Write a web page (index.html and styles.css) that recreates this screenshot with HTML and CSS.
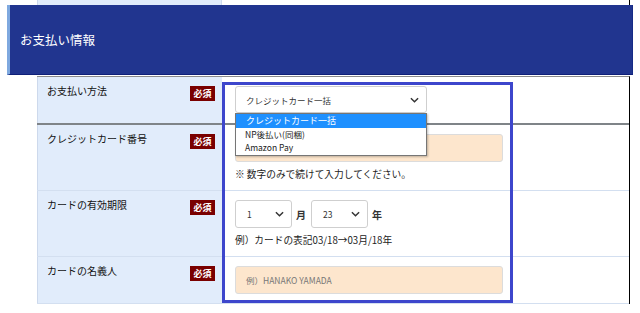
FILE: index.html
```html
<!DOCTYPE html>
<html lang="ja">
<head>
<meta charset="utf-8">
<link rel="stylesheet" href="styles.css">
</head>
<body>
<div class="prev">
  <div class="prev-gap"></div>
  <div class="prev-label"></div>
  <div class="prev-value"></div>
</div>
<div class="header">お支払い情報</div>
<div class="table">
  <div class="row row1">
    <div class="label"><span>お支払い方法</span><span class="req">必須</span></div>
    <div class="value">
      <div class="select wide"><span>クレジットカード一括</span><svg class="chev" viewBox="0 0 10 6" width="9" height="6"><path d="M1 1l4 4 4-4" fill="none" stroke="#333" stroke-width="1.6"/></svg></div>
    </div>
  </div>
  <div class="row row2">
    <div class="label"><span>クレジットカード番号</span><span class="req">必須</span></div>
    <div class="value">
      <div class="input"></div>
      <div class="note">※ 数字のみで続けて入力してください。</div>
    </div>
  </div>
  <div class="row row3">
    <div class="label"><span>カードの有効期限</span><span class="req">必須</span></div>
    <div class="value">
      <div class="dates">
        <div class="select small"><span>1</span><svg class="chev" viewBox="0 0 10 6" width="9" height="6"><path d="M1 1l4 4 4-4" fill="none" stroke="#333" stroke-width="1.6"/></svg></div>
        <span class="unit">月</span>
        <div class="select small"><span>23</span><svg class="chev" viewBox="0 0 10 6" width="9" height="6"><path d="M1 1l4 4 4-4" fill="none" stroke="#333" stroke-width="1.6"/></svg></div>
        <span class="unit">年</span>
      </div>
      <div class="note">例）カードの表記03/18→03月/18年</div>
    </div>
  </div>
  <div class="row row4">
    <div class="label"><span>カードの名義人</span><span class="req">必須</span></div>
    <div class="value">
      <div class="input"><span class="ph">例）HANAKO YAMADA</span></div>
    </div>
  </div>
  <div class="highlight"></div>
  <ul class="dropdown">
    <li class="active">クレジットカード一括</li>
    <li>NP後払い(同梱)</li>
    <li>Amazon Pay</li>
  </ul>
</div>
</body>
</html>
```
FILE: styles.css
```css
* { box-sizing: border-box; }
html, body { margin: 0; padding: 0; background: #fff; }
body {
  font-family: "Noto Sans CJK JP", "Noto Sans", sans-serif;
  color: #333;
  width: 640px;
  height: 313px;
  overflow: hidden;
}
.prev { display: flex; height: 5px; }
.prev-gap { width: 37px; }
.prev-label { width: 185px; background: #e1ecfb; border-left: 1px solid #cdd9ec; border-right: 1px solid #cfdbee; }
.prev-value { width: 408px; border-right: 1px solid #000; }

.header {
  margin-left: 7px;
  width: 626px;
  height: 70px;
  background: #21358f;
  border-left: 3px solid #7fa9df;
  border-right: 1px solid #162a86;
  border-bottom: 1px solid #0f1f78;
  color: #fff;
  font-size: 12.5px;
  display: flex;
  align-items: center;
  padding-left: 10px;
}

.table {
  position: relative;
  margin-top: 1px;
  margin-left: 37px;
  width: 593px;
  border-top: 1px solid #8a8a8a;
  border-right: 1px solid #000;
}
.row {
  display: grid;
  grid-template-columns: 185px 1fr;
  border-bottom: 1px solid #d3dff0;
}
.row1 { height: 48px; border-bottom: 2px solid #7f8488; }
.row2 { height: 66px; }
.row3 { height: 66px; }
.row4 { height: 47px; }

.label {
  background: #e1ecfb;
  border-left: 1px solid #cdd9ec;
  display: flex;
  justify-content: space-between;
  align-items: flex-start;
  padding: 7px 7px 0 9px;
  font-size: 10px;
  line-height: 14px;
  color: #111;
}
.req {
  background: #7a0000;
  color: #fff;
  font-size: 9px;
  font-weight: bold;
  line-height: 15px;
  height: 15px;
  width: 25px;
  text-align: center;
  margin-top: 2px;
}
.value { padding: 9px 0 0 13px; }

.select {
  display: flex;
  align-items: center;
  justify-content: space-between;
  height: 27px;
  border: 1px solid #cfcfcf;
  border-radius: 3px;
  background: #fff;
  font-size: 8.5px;
  color: #333;
  padding: 0 7px 0 10px;
}
.select.wide { width: 192px; }
.select.small { width: 57px; height: 28px; padding-left: 11px; }
.chev { display: block; }

.input {
  width: 268px;
  height: 28px;
  background: #fde6cd;
  border: 1px solid #dcdcdc;
  border-radius: 3px;
  display: flex;
  align-items: center;
  padding-left: 10px;
}
.ph { font-size: 8.5px; color: #777; }
.note { margin-top: 5px; font-size: 9.7px; line-height: 14px; color: #222; }

.dates { display: flex; align-items: center; }
.unit { font-size: 10px; font-weight: bold; margin: 0 4px 0 4px; }
.dates .unit:first-of-type { margin-right: 5px; }

.highlight {
  position: absolute;
  left: 185px;
  top: 5px;
  width: 291px;
  height: 221px;
  border: 3px solid #3d46cc;
  pointer-events: none;
}
.dropdown {
  position: absolute;
  left: 198px;
  top: 36px;
  width: 192px;
  margin: 0;
  padding: 0;
  list-style: none;
  background: #fff;
  border: 1px solid #767676;
  box-shadow: 1px 1px 2px rgba(0,0,0,0.25);
  font-size: 8.5px;
  color: #222;
}
.dropdown li { height: 13.5px; line-height: 13.5px; padding-left: 9px; }
.dropdown li.active { background: #1e90ff; color: #fff; font-size: 9px; padding-left: 10px; }
```
